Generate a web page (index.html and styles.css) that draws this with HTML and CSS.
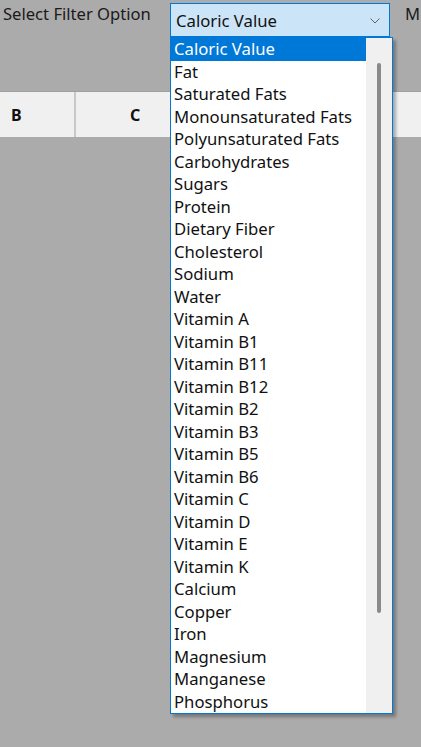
FILE: index.html
```html
<!DOCTYPE html>
<html>
<head>
<meta charset="utf-8">
<link rel="stylesheet" href="styles.css">
</head>
<body>
<div class="app">
  <div class="toolbar">
    <span class="label">Select Filter Option</span>
    <div class="combo">
      <span class="combo-text">Caloric Value</span>
      <svg class="chevron" width="10" height="6" viewBox="0 0 10 6"><path d="M0.5 0.5 L5 5 L9.5 0.5" fill="none" stroke="#606060" stroke-width="1"/></svg>
      <div class="dropdown">
        <ul class="list">
          <li class="selected">Caloric Value</li>
          <li>Fat</li>
          <li>Saturated Fats</li>
          <li>Monounsaturated Fats</li>
          <li>Polyunsaturated Fats</li>
          <li>Carbohydrates</li>
          <li>Sugars</li>
          <li>Protein</li>
          <li>Dietary Fiber</li>
          <li>Cholesterol</li>
          <li>Sodium</li>
          <li>Water</li>
          <li>Vitamin A</li>
          <li>Vitamin B1</li>
          <li>Vitamin B11</li>
          <li>Vitamin B12</li>
          <li>Vitamin B2</li>
          <li>Vitamin B3</li>
          <li>Vitamin B5</li>
          <li>Vitamin B6</li>
          <li>Vitamin C</li>
          <li>Vitamin D</li>
          <li>Vitamin E</li>
          <li>Vitamin K</li>
          <li>Calcium</li>
          <li>Copper</li>
          <li>Iron</li>
          <li>Magnesium</li>
          <li>Manganese</li>
          <li>Phosphorus</li>
        </ul>
        <div class="scrollbar"><div class="thumb"></div></div>
      </div>
    </div>
    <span class="label more">M</span>
  </div>
  <div class="grid-header">
    <div class="col col-b">B</div>
    <div class="col col-c">C</div>
  </div>
</div>
</body>
</html>
```

FILE: styles.css
```css
html, body {
  margin: 0;
  padding: 0;
  background: #ababab;
  font-family: "Noto Sans", "Open Sans", sans-serif;
  color: #1a1a1a;
  overflow: hidden;
}
.app {
  width: 421px;
  height: 747px;
}
.toolbar {
  display: flex;
  align-items: flex-start;
  height: 91px;
}
.label {
  font-size: 16.6px;
  line-height: 20px;
  padding-top: 4px;
  padding-left: 3px;
  white-space: nowrap;
  flex: 0 0 167px;
}
.more {
  flex: 0 0 auto;
  padding-left: 15px;
}
.combo {
  position: relative;
  margin-top: 3px;
  border: 1px solid #0078d7;
  background: #cce4f7;
  display: flex;
  align-items: center;
  justify-content: space-between;
  padding: 0 9px 0 5px;
  box-sizing: border-box;
  width: 220px;
  height: 34px;
  z-index: 2;
}
.combo-text {
  font-size: 16.7px;
  padding-top: 1px;
  color: #111;
}
.chevron {
  margin-top: 2px;
}
.dropdown {
  position: absolute;
  left: -1px;
  top: 33px;
  width: 221px;
  height: 675px;
  border: 1px solid #0078d7;
  background: #ffffff;
  display: flex;
  box-shadow: 3px 3px 3px rgba(0, 0, 0, 0.3);
}
.list {
  list-style: none;
  margin: 0;
  padding: 0;
  flex: 1;
}
.list li {
  height: 22.5px;
  line-height: 22px;
  font-size: 16.7px;
  padding-left: 3px;
  white-space: nowrap;
  color: #111;
}
.list li.selected {
  background: #0078d7;
  color: #ffffff;
}
.scrollbar {
  width: 26px;
  background: #f0f0f0;
  position: relative;
}
.thumb {
  position: absolute;
  left: 11px;
  top: 25px;
  width: 4px;
  height: 550px;
  background: #8a8a8a;
  border-radius: 2px;
}
.grid-header {
  display: flex;
  height: 46px;
  background: #f0f0f0;
  border-top: 1px solid #a0a0a0;
  box-sizing: border-box;
}
.col {
  font-weight: bold;
  font-size: 16px;
  display: flex;
  align-items: center;
  box-sizing: border-box;
  color: #111;
}
.col-b {
  width: 76px;
  padding-left: 11px;
  border-right: 2px solid #c8c8c8;
}
.col-c {
  width: 120px;
  padding-left: 54px;
}
```
